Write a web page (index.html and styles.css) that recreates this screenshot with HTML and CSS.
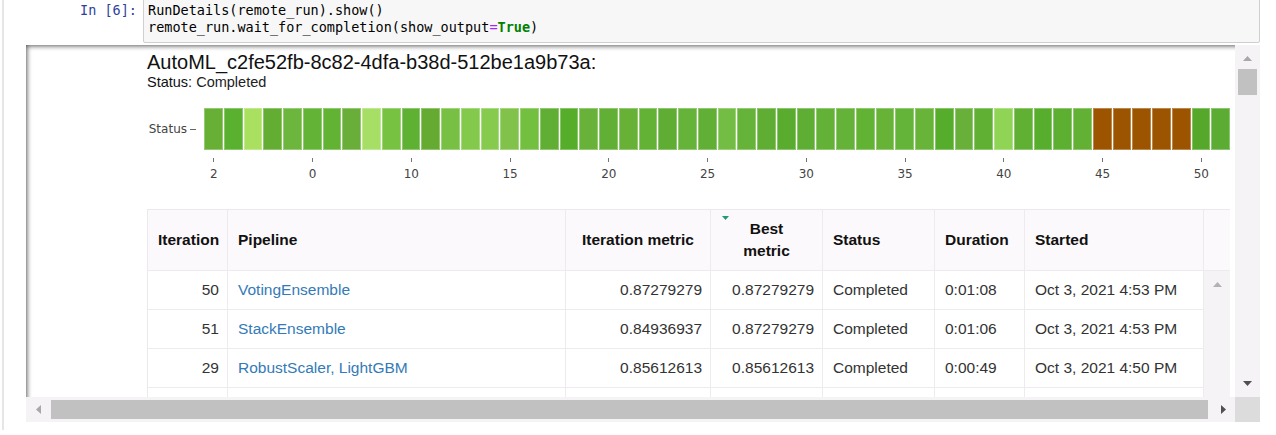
FILE: index.html
```html
<!DOCTYPE html>
<html>
<head>
<meta charset="utf-8">
<link rel="stylesheet" href="styles.css">
</head>
<body>
<div class="nb">
  <div class="in-row">
    <div class="prompt">In [6]:</div>
    <div class="code"><pre>RunDetails(remote_run).show()
remote_run.wait_for_completion(show_output<span class="op">=</span><span class="kw">True</span>)</pre></div>
  </div>
  <div class="out">
    <div class="view">
      <div class="widget">
        <div class="title">AutoML_c2fe52fb-8c82-4dfa-b38d-512be1a9b73a:</div>
        <div class="status"><span class="st-k">Status</span>: Completed</div>
        <div class="chart">
          <div class="yaxis"><span>Status</span><i class="ytick"></i></div>
          <div class="plot">
            <div class="bars">
              <div class="bar" style="background:#67b035"></div>
              <div class="bar" style="background:#5ab12f"></div>
              <div class="bar" style="background:#a9e060"></div>
              <div class="bar" style="background:#62ad32"></div>
              <div class="bar" style="background:#6db63d"></div>
              <div class="bar" style="background:#63b337"></div>
              <div class="bar" style="background:#62b334"></div>
              <div class="bar" style="background:#6aae3a"></div>
              <div class="bar" style="background:#a7de66"></div>
              <div class="bar" style="background:#78c242"></div>
              <div class="bar" style="background:#5fb134"></div>
              <div class="bar" style="background:#66ab31"></div>
              <div class="bar" style="background:#77c044"></div>
              <div class="bar" style="background:#83c94c"></div>
              <div class="bar" style="background:#86cb4e"></div>
              <div class="bar" style="background:#80c24a"></div>
              <div class="bar" style="background:#73bf3f"></div>
              <div class="bar" style="background:#60af34"></div>
              <div class="bar" style="background:#56ad2a"></div>
              <div class="bar" style="background:#68b239"></div>
              <div class="bar" style="background:#62af35"></div>
              <div class="bar" style="background:#66b136"></div>
              <div class="bar" style="background:#63b236"></div>
              <div class="bar" style="background:#5fad33"></div>
              <div class="bar" style="background:#66b33a"></div>
              <div class="bar" style="background:#61b035"></div>
              <div class="bar" style="background:#74bd44"></div>
              <div class="bar" style="background:#66b33a"></div>
              <div class="bar" style="background:#60ad33"></div>
              <div class="bar" style="background:#5aac2e"></div>
              <div class="bar" style="background:#5fae34"></div>
              <div class="bar" style="background:#63b237"></div>
              <div class="bar" style="background:#64b237"></div>
              <div class="bar" style="background:#62b234"></div>
              <div class="bar" style="background:#66b337"></div>
              <div class="bar" style="background:#64b439"></div>
              <div class="bar" style="background:#68b438"></div>
              <div class="bar" style="background:#56ad2c"></div>
              <div class="bar" style="background:#68b03a"></div>
              <div class="bar" style="background:#5fb033"></div>
              <div class="bar" style="background:#8fd454"></div>
              <div class="bar" style="background:#60b034"></div>
              <div class="bar" style="background:#56ae2c"></div>
              <div class="bar" style="background:#5daf32"></div>
              <div class="bar" style="background:#62b034"></div>
              <div class="bar" style="background:#9c5400"></div>
              <div class="bar" style="background:#9c5400"></div>
              <div class="bar" style="background:#9c5400"></div>
              <div class="bar" style="background:#9c5400"></div>
              <div class="bar" style="background:#9c5400"></div>
              <div class="bar" style="background:#56a82a"></div>
              <div class="bar" style="background:#5cac33"></div>
            </div>
            <div class="ticks">
              <div class="tg"><div class="tc"><i class="tk"></i><span class="tl">2</span></div></div>
              <div class="tg"><div class="tc"><i class="tk"></i><span class="tl">0</span></div></div>
              <div class="tg"><div class="tc"><i class="tk"></i><span class="tl">10</span></div></div>
              <div class="tg"><div class="tc"><i class="tk"></i><span class="tl">15</span></div></div>
              <div class="tg"><div class="tc"><i class="tk"></i><span class="tl">20</span></div></div>
              <div class="tg"><div class="tc"><i class="tk"></i><span class="tl">25</span></div></div>
              <div class="tg"><div class="tc"><i class="tk"></i><span class="tl">30</span></div></div>
              <div class="tg"><div class="tc"><i class="tk"></i><span class="tl">35</span></div></div>
              <div class="tg"><div class="tc"><i class="tk"></i><span class="tl">40</span></div></div>
              <div class="tg"><div class="tc"><i class="tk"></i><span class="tl">45</span></div></div>
              <div class="tg"><div class="tc"><i class="tk"></i><span class="tl">50</span></div></div>
            </div>
          </div>
        </div>
        <div class="tbl">
          <div class="th">Iteration</div>
          <div class="th">Pipeline</div>
          <div class="th c">Iteration metric</div>
          <div class="th c best"><svg class="sort" width="7" height="4" viewBox="0 0 7 4"><path d="M0 0H7L3.5 4Z" fill="#1f9e6c"/></svg>Best<br>metric</div>
          <div class="th">Status</div>
          <div class="th">Duration</div>
          <div class="th">Started</div>
          <div class="th fill"></div>
          <div class="tscroll"><svg width="9" height="5" viewBox="0 0 9 5"><path d="M4.5 0L9 5H0Z" fill="#b3b1b3"/></svg></div>

          <div class="td num">50</div>
          <div class="td"><a class="lnk">VotingEnsemble</a></div>
          <div class="td num">0.87279279</div>
          <div class="td num">0.87279279</div>
          <div class="td">Completed</div>
          <div class="td">0:01:08</div>
          <div class="td">Oct 3, 2021 4:53 PM</div>

          <div class="td num">51</div>
          <div class="td"><a class="lnk">StackEnsemble</a></div>
          <div class="td num">0.84936937</div>
          <div class="td num">0.87279279</div>
          <div class="td">Completed</div>
          <div class="td">0:01:06</div>
          <div class="td">Oct 3, 2021 4:53 PM</div>

          <div class="td num">29</div>
          <div class="td"><a class="lnk">RobustScaler, LightGBM</a></div>
          <div class="td num">0.85612613</div>
          <div class="td num">0.85612613</div>
          <div class="td">Completed</div>
          <div class="td">0:00:49</div>
          <div class="td">Oct 3, 2021 4:50 PM</div>

          <div class="td"></div>
          <div class="td"></div>
          <div class="td"></div>
          <div class="td"></div>
          <div class="td"></div>
          <div class="td"></div>
          <div class="td"></div>
        </div>
      </div>
    </div>
    <div class="vbar">
      <svg class="arr" width="9" height="5" viewBox="0 0 9 5"><path d="M4.5 0L9 5H0Z" fill="#a9a7a9"/></svg>
      <div class="vthumb"></div>
      <div class="grow"></div>
      <svg class="arr-dn" width="9" height="5" viewBox="0 0 9 5"><path d="M0 0H9L4.5 5Z" fill="#505050"/></svg>
    </div>
    <div class="hbar">
      <svg width="5" height="9" viewBox="0 0 5 9"><path d="M5 0V9L0 4.5Z" fill="#a9a7a9"/></svg>
      <div class="hthumb"></div>
      <svg width="5" height="9" viewBox="0 0 5 9"><path d="M0 0V9L5 4.5Z" fill="#505050"/></svg>
    </div>
    <div class="corner"></div>
  </div>
</div>
</body>
</html>
```

FILE: styles.css
```css
* { box-sizing: border-box; }
html, body { margin: 0; padding: 0; background: #fff; }
body {
  width: 1276px;
  height: 435px;
  overflow: hidden;
  font-family: "Liberation Sans", Arial, sans-serif;
  color: #222;
}
.nb {
  margin-left: 2px;
  border-left: 2px solid #e6e6e6;
  height: 435px;
  padding-right: 16px;
}

/* input cell */
.in-row {
  display: flex;
  margin-top: -5px;
}
.prompt {
  width: 139px;
  flex: none;
  text-align: right;
  padding: 7px 6px 0 0;
  font-family: "DejaVu Sans Mono", monospace;
  font-size: 13.5px;
  line-height: 17px;
  color: #303f9f;
}
.code {
  flex: 1;
  background: #f7f7f7;
  border: 1px solid #cfcfcf;
  border-radius: 2px;
  padding: 6px 4px 6px 4px;
}
.code pre {
  margin: 0;
  font-family: "DejaVu Sans Mono", monospace;
  font-size: 13.5px;
  line-height: 17px;
  color: #000;
}
.code .kw { color: #008000; font-weight: bold; }
.code .op { color: #aa22ff; }

/* output area */
.out {
  display: grid;
  grid-template-columns: 1fr 25px;
  grid-template-rows: 352px 25px;
  margin: 2px 0 0 22px;
}
.view {
  overflow: hidden;
  padding: 5px 0 0 121px;
  box-shadow: inset 4px 4px 5px -3px rgba(0, 0, 0, 0.65);
}
.widget { width: 1084px; }
.title {
  font-size: 20px;
  line-height: 24px;
  color: #111;
}
.status {
  font-size: 14.5px;
  line-height: 17px;
  color: #222;
}
.st-k { color: #111; }

/* chart */
.chart {
  display: flex;
  padding-top: 17px;
}
.yaxis {
  width: 57px;
  height: 42px;
  flex: none;
  display: flex;
  align-items: center;
  justify-content: flex-end;
  padding-right: 8px;
  font-family: "DejaVu Sans", Verdana, sans-serif;
  font-size: 12px;
  color: #444;
}
.ytick {
  display: block;
  width: 6px;
  height: 1px;
  background: #666;
  margin-left: 3px;
}
.plot { width: 1027px; }
.bars {
  display: grid;
  grid-template-columns: repeat(52, 1fr);
  height: 42px;
}
.bar {
  border-right: 1px solid #fff;
  box-shadow: inset 0 0 0 1px rgba(255, 255, 255, 0.3);
}
.ticks {
  display: flex;
  margin-top: 8px;
}
.tg { width: calc(100% * 5 / 52); flex: none; }
.tg:last-child { width: calc(100% * 2 / 52); }
.tc {
  width: 20%;
  display: flex;
  flex-direction: column;
  align-items: center;
}
.tg:last-child .tc { width: 50%; }
.tk {
  display: block;
  width: 1px;
  height: 4px;
  background: #777;
}
.tl {
  margin-top: 5px;
  font-family: "DejaVu Sans", Verdana, sans-serif;
  font-size: 12px;
  line-height: 14px;
  color: #444;
  white-space: nowrap;
}

/* table */
.tbl {
  margin-top: 28px;
  width: 1083px;
  display: grid;
  grid-template-columns: 80px 338px 145px 112px 112px 90px 179px 26px;
  grid-template-rows: 61px repeat(4, 39px);
  border-left: 1px solid #ece9ec;
  border-top: 1px solid #ece9ec;
  font-size: 15.5px;
}
.th, .td {
  display: flex;
  align-items: center;
  padding: 0 10px;
  border-right: 1px solid #eeebee;
  border-bottom: 1px solid #eeebee;
  white-space: nowrap;
}
.th {
  background: #fcf9fc;
  font-weight: bold;
  color: #111;
  line-height: 22px;
}
.th.c { justify-content: center; text-align: center; }
.th.best { position: relative; }
.sort { position: absolute; left: 11px; top: 6px; }
.th.fill { border-right: none; }
.td {
  background: #fff;
  color: #333;
}
.td.num { justify-content: flex-end; padding-right: 8px; }
.lnk { color: #337ab7; text-decoration: none; }
.tscroll {
  grid-column: 8;
  grid-row: 2 / span 4;
  background: #f5f3f5;
  display: flex;
  justify-content: center;
  align-items: flex-start;
  padding-top: 11px;
}

/* scrollbars */
.vbar {
  background: #f5f3f5;
  display: flex;
  flex-direction: column;
  align-items: center;
  padding-top: 11px;
}
.vthumb {
  margin-top: 8px;
  width: 19px;
  height: 26px;
  background: #c1c1c1;
}
.grow { flex: 1; }
.arr-dn { margin-bottom: 11px; }
.hbar {
  background: #f5f3f5;
  display: flex;
  align-items: center;
  padding: 0 9px 0 10px;
}
.hthumb {
  flex: 1;
  height: 19px;
  margin: 0 13px 0 10px;
  background: #c1c1c1;
}
.corner { background: #dcdcdc; }
```
